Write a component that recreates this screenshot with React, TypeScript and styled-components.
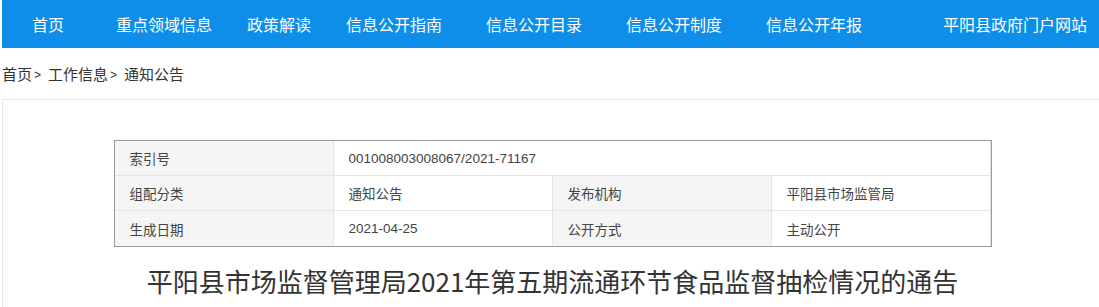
import React from "react";
import styled, { createGlobalStyle } from "styled-components";

const GlobalStyle = createGlobalStyle`
  html, body {
    margin: 0;
    padding: 0;
    overflow: hidden;
    background: #fff;
    font-family: "Noto Sans CJK SC", "Liberation Sans", sans-serif;
  }
`;

interface INavItem {
  $width?: number;
}

interface ICell {
  $label?: boolean;
  $span?: number;
}

const navItems: Array<[string, number]> = [
  ["首页", 84],
  ["重点领域信息", 131],
  ["政策解读", 99],
  ["信息公开指南", 140],
  ["信息公开目录", 140],
  ["信息公开制度", 140],
  ["信息公开年报", 177],
  ["平阳县政府门户网站", 0]
];

const App: React.FC = () => {
  return (
    <Page>
      <GlobalStyle />
      <NavBar>
        {navItems.map(([text, width]) => (
          <NavItem key={text} $width={width}>
            {text}
          </NavItem>
        ))}
      </NavBar>
      <Crumbs>
        <Crumb>首页</Crumb>
        <Arrow>&gt;</Arrow>
        <Crumb>工作信息</Crumb>
        <Arrow>&gt;</Arrow>
        <Crumb>通知公告</Crumb>
      </Crumbs>
      <ContentBox>
        <InfoTable>
          <Cell $label>索引号</Cell>
          <Cell $span={3}>001008003008067/2021-71167</Cell>
          <Cell $label>组配分类</Cell>
          <Cell>通知公告</Cell>
          <Cell $label>发布机构</Cell>
          <Cell>平阳县市场监管局</Cell>
          <Cell $label>生成日期</Cell>
          <Cell>2021-04-25</Cell>
          <Cell $label>公开方式</Cell>
          <Cell>主动公开</Cell>
        </InfoTable>
        <Title>平阳县市场监督管理局2021年第五期流通环节食品监督抽检情况的通告</Title>
      </ContentBox>
    </Page>
  );
};

const Page = styled.div({
  width: "1100px",
  paddingLeft: "2px"
});

const NavBar = styled.nav({
  display: "flex",
  alignItems: "center",
  height: "48px",
  paddingLeft: "30px",
  backgroundColor: "#0e8ee8"
});

const NavItem = styled.a<INavItem>(props => ({
  flex: "none",
  width: props.$width ? `${props.$width}px` : "auto",
  color: "#fff",
  fontSize: "16px",
  lineHeight: "48px",
  whiteSpace: "nowrap",
  cursor: "pointer"
}));

const Crumbs = styled.div({
  display: "flex",
  alignItems: "center",
  height: "51px",
  fontSize: "15px",
  color: "#333"
});

const Crumb = styled.span({
  whiteSpace: "nowrap"
});

const Arrow = styled.span({
  fontFamily: '"Liberation Sans", sans-serif',
  fontSize: "12px",
  margin: "2px 7px 0 2px"
});

const ContentBox = styled.div({
  borderTop: "1px solid #e6eaef",
  borderLeft: "1px solid #e6eaef",
  padding: "40px 0 0",
  minHeight: "200px"
});

const InfoTable = styled.div({
  display: "grid",
  gridTemplateColumns: "repeat(4, 1fr)",
  gridAutoRows: "35px",
  width: "878px",
  margin: "0 auto",
  border: "1px solid #999",
  boxSizing: "border-box",
  fontFamily: '"Liberation Sans", "Noto Sans CJK SC", sans-serif',
  fontSize: "13.5px",
  color: "#444"
});

const Cell = styled.div<ICell>(props => ({
  gridColumn: props.$span ? `span ${props.$span}` : "auto",
  display: "flex",
  alignItems: "center",
  paddingLeft: "15px",
  backgroundColor: props.$label ? "#f5f5f5" : "#fff",
  borderRight: "1px solid #e5e5e5",
  borderBottom: "1px solid #e5e5e5",
  "&:nth-last-child(-n + 4)": {
    borderBottom: "none"
  }
}));

const Title = styled.h1({
  margin: "16px 0 0",
  textAlign: "center",
  fontSize: "26px",
  fontWeight: "normal",
  color: "#333",
  lineHeight: "36px",
  whiteSpace: "nowrap"
});

export default App;
